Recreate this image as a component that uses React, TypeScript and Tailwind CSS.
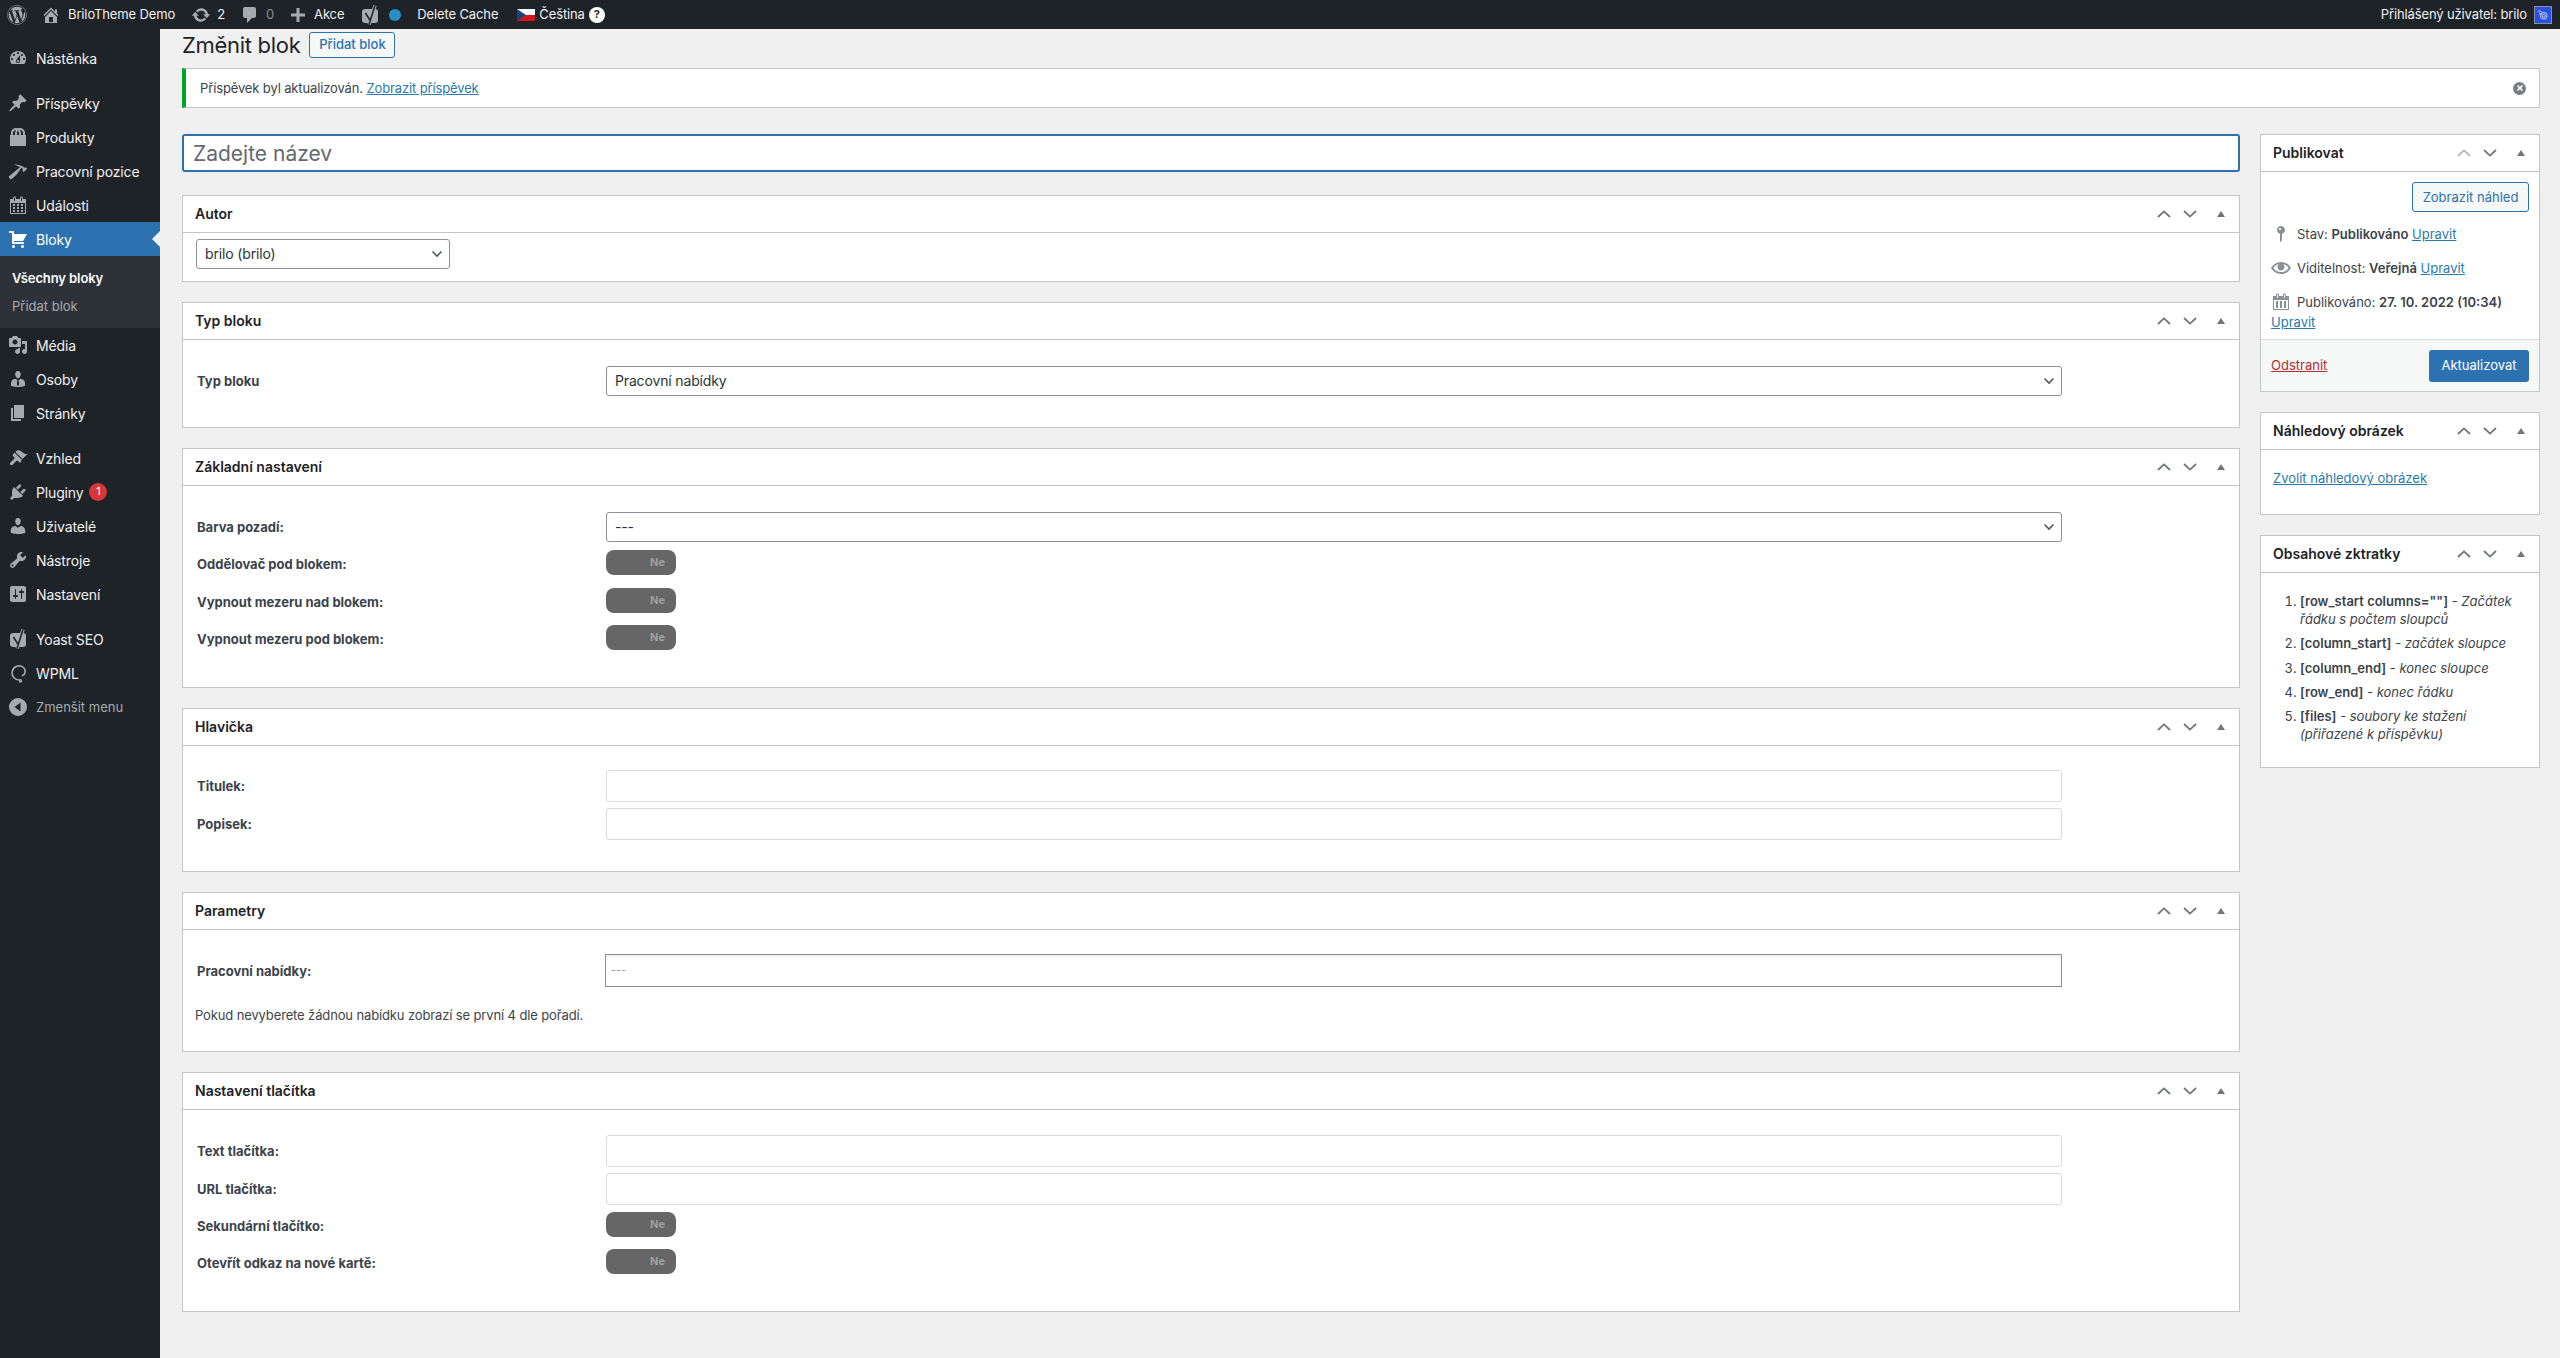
import React from "react";
import { FaWordpress } from "react-icons/fa";

// =============================================================================
// ICONS - dashicons style paths, 20x20 box
// =============================================================================

const paths = {
  dashboard:
    "M3.76 16h12.48c1.1-1.37 1.76-3.11 1.76-5 0-4.42-3.58-8-8-8s-8 3.58-8 8c0 1.89.66 3.63 1.76 5zM10 4c.55 0 1 .45 1 1s-.45 1-1 1-1-.45-1-1 .45-1 1-1zM6 6c.55 0 1 .45 1 1s-.45 1-1 1-1-.45-1-1 .45-1 1-1zm8 0c.55 0 1 .45 1 1s-.45 1-1 1-1-.45-1-1 .45-1 1-1zm-5.37 5.55L12 7v6c0 1.1-.9 2-2 2s-2-.9-2-2c0-.57.24-1.08.63-1.45zM4 10c.55 0 1 .45 1 1s-.45 1-1 1-1-.45-1-1 .45-1 1-1zm12 0c.55 0 1 .45 1 1s-.45 1-1 1-1-.45-1-1 .45-1 1-1zm-5 3c0-.55-.45-1-1-1s-1 .45-1 1 .45 1 1 1 1-.45 1-1z",
  post: "M10.44 3.02l1.82-1.82 6.36 6.35-1.83 1.82c-1.05-.68-2.48-.57-3.41.36l-.75.75c-.92.93-1.04 2.35-.35 3.41l-1.83 1.82-2.41-2.41-2.8 2.79c-.42.42-3.38 2.71-3.8 2.29s1.86-3.39 2.28-3.81l2.79-2.79L4.1 9.36l1.83-1.82c1.05.69 2.48.57 3.4-.36l.75-.75c.93-.92 1.05-2.35.36-3.41z",
  products:
    "M17 8h1v11H2V8h1V6c0-2.76 2.24-5 5-5 .71 0 1.39.15 2 .42.61-.27 1.29-.42 2-.42 2.76 0 5 2.24 5 5v2zM5 6v2h2V6c0-1.13.39-2.16 1.02-3H8C6.35 3 5 4.35 5 6zm10 2V6c0-1.65-1.35-3-3-3h-.02c.63.84 1.02 1.87 1.02 3v2h2zm-5-4.22C9.39 4.33 9 5.12 9 6v2h2V6c0-.88-.39-1.67-1-2.22z",
  hammer:
    "M17.7 6.32l1.41 1.42-3.47 3.41-1.42-1.42.84-.82c-.32-.76-.81-1.57-1.51-2.31l-4.61 6.59-5.26 4.7c-.39.39-1.02.39-1.42 0l-1.2-1.21c-.39-.39-.39-1.02 0-1.41l10.97-9.04c-1.37-.86-3.11-1.68-5.06-2.44l.32-.56c2.87.68 5.72 1.27 7.45 2.28.83.48 1.37.9 1.79 1.25z",
  calendarAlt:
    "M15 4h3v15H2V4h3V3c0-.41.15-.76.44-1.06.29-.29.65-.44 1.06-.44s.77.15 1.06.44c.29.3.44.65.44 1.06v1h4V3c0-.41.15-.76.44-1.06.29-.29.65-.44 1.06-.44s.77.15 1.06.44c.29.3.44.65.44 1.06v1zM6 3v2.5c0 .14.05.26.15.36.09.09.21.14.35.14s.26-.05.35-.14c.1-.1.15-.22.15-.36V3c0-.14-.05-.26-.15-.35-.09-.1-.21-.15-.35-.15s-.26.05-.35.15c-.1.09-.15.21-.15.35zm7 0v2.5c0 .14.05.26.14.36.1.09.22.14.36.14s.26-.05.36-.14c.09-.1.14-.22.14-.36V3c0-.14-.05-.26-.14-.35-.1-.1-.22-.15-.36-.15s-.26.05-.36.15c-.09.09-.14.21-.14.35zm4 15V8H3v10h14zM7 9v2H5V9h2zm2 0h2v2H9V9zm4 2V9h2v2h-2zm-6 1v2H5v-2h2zm2 0h2v2H9v-2zm4 2v-2h2v2h-2zm-6 1v2H5v-2h2zm4 2H9v-2h2v2zm4 0h-2v-2h2v2z",
  cart: "M6 13h9c.55 0 1 .45 1 1s-.45 1-1 1H5c-.55 0-1-.45-1-1V4H2c-.55 0-1-.45-1-1s.45-1 1-1h3c.55 0 1 .45 1 1v2h13l-4 7H6v1zm-.5 3c.83 0 1.5.67 1.5 1.5S6.33 19 5.5 19 4 18.33 4 17.5 4.67 16 5.5 16zm9 0c.83 0 1.5.67 1.5 1.5s-.67 1.5-1.5 1.5-1.5-.67-1.5-1.5.67-1.5 1.5-1.5z",
  media:
    "M13 11V4c0-.55-.45-1-1-1h-1.67L9 1H5L3.67 3H2c-.55 0-1 .45-1 1v7c0 .55.45 1 1 1h10c.55 0 1-.45 1-1zM7 4.5c1.38 0 2.5 1.12 2.5 2.5S8.38 9.5 7 9.5 4.5 8.38 4.5 7 5.62 4.5 7 4.5zM14 6h5v10.5c0 1.38-1.12 2.5-2.5 2.5S14 17.88 14 16.5s1.12-2.5 2.5-2.5c.17 0 .34.02.5.05V9h-3V6zm-4 8.05V13h2v3.5c0 1.38-1.12 2.5-2.5 2.5S7 17.88 7 16.5 8.12 14 9.5 14c.17 0 .34.02.5.05z",
  businessman:
    "M7.3 6l-.03-.19c-.04-.37-.05-.73-.03-1.08.02-.36.1-.71.25-1.04.14-.32.31-.61.52-.86s.49-.46.83-.6c.34-.15.72-.23 1.13-.23.69 0 1.26.2 1.71.59s.76.87.91 1.44.18 1.16.09 1.78l-.03.19c-.01.09-.05.25-.11.48-.05.24-.12.47-.2.69-.08.21-.19.45-.34.72-.14.27-.3.49-.47.69-.18.19-.4.34-.67.48-.27.13-.55.19-.86.19s-.59-.06-.87-.19c-.26-.13-.49-.29-.67-.5-.18-.2-.34-.42-.49-.66-.15-.25-.26-.49-.34-.73-.09-.25-.16-.47-.21-.67-.06-.21-.1-.37-.12-.5zm9.2 6.24c.41.7.5 1.41.5 2.14v2.49c0 .03-.12.08-.29.13-.18.04-.42.13-.97.27-.55.12-1.1.24-1.65.34s-1.19.19-1.95.27c-.75.08-1.46.12-2.13.12-.68 0-1.39-.04-2.14-.12-.75-.07-1.4-.17-1.98-.27-.58-.11-1.08-.23-1.56-.34-.49-.11-.8-.21-1.06-.29L3 16.87v-2.49c0-.75.07-1.46.46-2.15s.81-1.25 1.5-1.68C5.66 10.12 7.19 10 8 10l1.67 1.67L9 13v3l1.02 1.08L11 16v-3l-.68-1.33L11.97 10c.77 0 2.2.07 2.9.52.71.45 1.21 1.02 1.63 1.72z",
  page: "M6 15V2h10v13H6zm-1 1h8v2H3V5h2v11z",
  appearance:
    "M14.48 11.06L7.41 3.99l1.5-1.5c.5-.56 2.3-.47 3.51.32 1.21.8 1.43 1.28 2.91 2.1 1.18.64 2.45 1.26 4.45.85zm-.71.71L6.7 4.7 4.93 6.47c-.39.39-.39 1.02 0 1.41l1.06 1.06c.59.59.59 1.53 0 2.12l-3.53 3.53c-.59.59-.59 1.54 0 2.12.59.59 1.53.59 2.12 0l3.53-3.53c.59-.59 1.53-.59 2.12 0l1.06 1.06c.39.39 1.02.39 1.41 0z",
  plugins:
    "M13.11 4.36L9.87 7.6 8 5.73l3.24-3.24c.35-.34 1.05-.2 1.56.32.52.51.66 1.21.31 1.55zm-8 1.77l.91-1.12 9.01 9.01-1.19.84c-.71.71-2.63 1.16-3.82 1.16H6.14L4.9 17.26c-.59.59-1.54.59-2.12 0-.59-.58-.59-1.53 0-2.12l1.24-1.24v-3.88c0-1.13.4-3.19 1.09-3.89zm7.26 3.97l3.24-3.24c.34-.35 1.04-.21 1.55.31.52.51.66 1.21.31 1.55l-3.24 3.25z",
  users:
    "M10 9.25c-2.27 0-2.73-3.44-2.73-3.44C7 4.02 7.82 2 9.97 2c2.16 0 2.98 2.02 2.71 3.81 0 0-.41 3.44-2.68 3.44zm0 2.57L12.72 10c2.39 0 4.52 2.33 4.52 4.53v2.49s-3.65 1.13-7.24 1.13c-3.65 0-7.24-1.13-7.24-1.13v-2.49c0-2.25 1.94-4.48 4.47-4.48z",
  tools:
    "M16.68 9.77c-1.34 1.34-3.3 1.67-4.95.99l-5.41 6.52c-.99.99-2.59.99-3.58 0s-.99-2.59 0-3.57l6.52-5.42c-.68-1.65-.35-3.61.99-4.95 1.28-1.28 3.12-1.62 4.72-1.06l-2.89 2.89 2.82 2.82 2.86-2.87c.53 1.58.18 3.39-1.08 4.65zM3.81 16.21c.4.39 1.04.39 1.43 0 .4-.4.4-1.04 0-1.43-.39-.4-1.03-.4-1.43 0-.39.39-.39 1.03 0 1.43z",
  settings:
    "M18 16V4c0-1.1-.9-2-2-2H4c-1.1 0-2 .9-2 2v12c0 1.1.9 2 2 2h12c1.1 0 2-.9 2-2zM8 11h1c.55 0 1 .45 1 1s-.45 1-1 1H8v1.5c0 .28-.22.5-.5.5s-.5-.22-.5-.5V13H6c-.55 0-1-.45-1-1s.45-1 1-1h1V5.5c0-.28.22-.5.5-.5s.5.22.5.5V11zm5-2h-1c-.55 0-1-.45-1-1s.45-1 1-1h1V5.5c0-.28.22-.5.5-.5s.5.22.5.5V7h1c.55 0 1 .45 1 1s-.45 1-1 1h-1v5.5c0 .28-.22.5-.5.5s-.5-.22-.5-.5V9z",
  collapse: "M10 1a9 9 0 1 0 0 18 9 9 0 0 0 0-18zm2.5 4.5v9L6.5 10z",
  home: "M16 8.5l1.53 1.53-1.06 1.06L10 4.62l-6.47 6.47-1.06-1.06L10 2.5l4 4v-2h2v4zm-6-2.46l6 5.99V18H4v-5.97zM12 17v-5H8v5h4z",
  update:
    "M10.2 3.28c3.53 0 6.43 2.61 6.92 6h2.08l-3.5 4-3.5-4h2.32c-.45-1.97-2.21-3.45-4.32-3.45-1.45 0-2.73.71-3.54 1.78L4.95 5.66C6.23 4.2 8.11 3.28 10.2 3.28zm-.4 13.44c-3.52 0-6.43-2.61-6.92-6H.8l3.5-4c1.17 1.33 2.33 2.67 3.5 4H5.48c.45 1.97 2.21 3.45 4.32 3.45 1.45 0 2.73-.71 3.54-1.78l1.71 1.95c-1.28 1.46-3.15 2.38-5.25 2.38z",
  comment: "M5 2h9c1.1 0 2 .9 2 2v7c0 1.1-.9 2-2 2h-2l-5 5v-5H5c-1.1 0-2-.9-2-2V4c0-1.1.9-2 2-2z",
  plus: "M17 8.5v3h-5.5V17h-3v-5.5H3v-3h5.5V3h3v5.5z",
  status:
    "M14 6c0 1.86-1.28 3.41-3 3.86V16c0 1-2 2-2 2V9.86c-1.72-.45-3-2-3-3.86 0-2.21 1.79-4 4-4s4 1.79 4 4zM8 5c0 .55.45 1 1 1s1-.45 1-1-.45-1-1-1-1 .45-1 1z",
  eye: "M19.7 9.4C17.7 6 14 3.9 10 3.9S2.3 6 .3 9.4L0 10l.3.6c2 3.4 5.7 5.5 9.7 5.5s7.7-2.1 9.7-5.5l.3-.6-.3-.6zM10 14.1c-3.1 0-6-1.6-7.7-4.1C3.6 8 5.7 6.6 8 6.1c-.9.6-1.5 1.7-1.5 2.9 0 1.9 1.6 3.5 3.5 3.5s3.5-1.6 3.5-3.5c0-1.2-.6-2.3-1.5-2.9 2.3.5 4.4 1.9 5.7 3.9-1.7 2.5-4.6 4.1-7.7 4.1z",
  calendar:
    "M15 4h3v14H2V4h3V3c0-.83.67-1.5 1.5-1.5S8 2.17 8 3v1h4V3c0-.83.67-1.5 1.5-1.5S15 2.17 15 3v1zM6 3v2.5c0 .28.22.5.5.5S7 5.78 7 5.5V3c0-.28-.22-.5-.5-.5S6 2.72 6 3zm7 0v2.5c0 .28.22.5.5.5s.5-.22.5-.5V3c0-.28-.22-.5-.5-.5s-.5.22-.5.5zm4 14V8H3v9zM7 16V9H5v7h2zm4 0V9H9v7h2zm4 0V9h-2v7h2z",
};

type IconName = keyof typeof paths;

const Dash: React.FC<{ name: IconName; className?: string }> = ({ name, className }) => (
  <svg viewBox="0 0 20 20" fill="currentColor" fillRule="evenodd" className={className}>
    <path d={paths[name]} />
  </svg>
);

const WpmlIcon: React.FC = () => (
  <svg viewBox="0 0 20 20" fill="none" stroke="currentColor" strokeWidth="1.6" className="w-5 h-5">
    <path d="M15.5 4.5a7 7 0 1 0-3 12.3M15.5 4.5c1.8 1.8 2 4.6.7 6.8-.6 1-1.6 1.5-2.4.9M12.5 16.8c.9.1 1.2 1.5.2 1.9-.6.2-1.2-.1-1.4-.6" />
  </svg>
);

// filled box with the y cut out, the long stroke sticks out of the box
const YoastIcon: React.FC<{ className?: string }> = ({ className }) => (
  <svg viewBox="0 0 20 20" fill="none" className={className}>
    <rect x="2" y="4" width="16" height="14" rx="3" fill="#a7aaad" />
    <path d="M15 .5L9 19.5" stroke="#a7aaad" strokeWidth="3.4" />
    <path d="M15 .5L9 19.5M5.5 8l4.3 7" stroke="#1e2328" strokeWidth="1.5" />
  </svg>
);

// =============================================================================
// ADMIN BAR
// =============================================================================

const AdminBar: React.FC = () => (
  <header className="h-[29px] bg-[#1e2327] flex items-center text-[13px] tracking-[-0.13px] text-[#f0f0f1] shrink-0">
    <FaWordpress className="ml-[7px] w-5 h-5 text-[#a7aaad]" />
    <Dash name="home" className="ml-[14px] w-5 h-5 text-[#a7aaad]" />
    <span className="ml-[7px]">BriloTheme Demo</span>
    <Dash name="update" className="ml-[16px] w-5 h-5 text-[#a7aaad]" />
    <span className="ml-[6px]">2</span>
    <Dash name="comment" className="ml-[15px] w-5 h-5 text-[#a7aaad]" />
    <span className="ml-[6px] text-[#8b8f94]">0</span>
    <Dash name="plus" className="ml-[14px] w-5 h-5 text-[#a7aaad]" />
    <span className="ml-[6px]">Akce</span>
    <YoastIcon className="ml-[16px] w-5 h-5" />
    <span className="ml-[9px] w-3 h-3 rounded-full bg-[#2a8fc9]" />
    <span className="ml-[16px]">Delete Cache</span>
    <svg viewBox="0 0 18 12" className="ml-[19px] w-[18px] h-3">
      <rect width="18" height="6" fill="#fff" />
      <rect y="6" width="18" height="6" fill="#d7141a" />
      <path d="M0 0l9 6-9 6z" fill="#11457e" />
    </svg>
    <span className="ml-1">Čeština</span>
    <span className="ml-1 w-4 h-4 rounded-full bg-white text-[#1e2327] flex items-center justify-center text-[11px] font-bold">?</span>
    <span className="ml-auto">Přihlášený uživatel: brilo</span>
    <span className="ml-[7px] mr-2 w-[18px] h-[18px] bg-[#2a50e6] border border-[#8c8f94] flex items-center justify-center">
      <svg viewBox="0 0 16 16" fill="none" stroke="#fff" strokeWidth="1" className="w-3 h-3">
        <circle cx="9" cy="9" r="4.5" />
        <circle cx="9" cy="9" r="2" />
        <path d="M1 3h5M3 6.5h3" />
      </svg>
    </span>
  </header>
);

// =============================================================================
// SIDEBAR
// =============================================================================

const menuGroups: { name?: IconName; label: string; badge?: string; active?: boolean; sep?: boolean }[] = [
  { name: "dashboard", label: "Nástěnka" },
  { name: "post", label: "Příspěvky", sep: true },
  { name: "products", label: "Produkty" },
  { name: "hammer", label: "Pracovní pozice" },
  { name: "calendarAlt", label: "Události" },
  { name: "cart", label: "Bloky", active: true },
];

const menuRest: { name?: IconName; label: string; badge?: string; sep?: boolean; custom?: "yoast" | "wpml"; dim?: boolean }[] = [
  { name: "media", label: "Média" },
  { name: "businessman", label: "Osoby" },
  { name: "page", label: "Stránky" },
  { name: "appearance", label: "Vzhled", sep: true },
  { name: "plugins", label: "Pluginy", badge: "1" },
  { name: "users", label: "Uživatelé" },
  { name: "tools", label: "Nástroje" },
  { name: "settings", label: "Nastavení" },
  { custom: "yoast", label: "Yoast SEO", sep: true },
  { custom: "wpml", label: "WPML" },
  { name: "collapse", label: "Zmenšit menu", dim: true },
];

const Sidebar: React.FC = () => (
  <aside className="w-40 shrink-0 bg-[#1e2328] pt-3 text-sm text-[#f0f0f1]">
    {menuGroups.map((item) => (
      <div
        key={item.label}
        className={`relative h-[34px] flex items-center ${item.sep ? "mt-[11px]" : ""} ${item.active ? "bg-[#2c72b0] text-white" : ""}`}
      >
        <span className={`w-9 flex justify-center pl-0 ${item.active ? "text-white" : "text-[#a7aaad]"}`}>
          <Dash name={item.name!} className="w-5 h-5" />
        </span>
        <span className="pt-px tracking-[-0.15px]">{item.label}</span>
        {item.active && (
          <span className="absolute right-0 top-[9px] border-y-8 border-r-8 border-y-transparent border-r-[#f0f0f0]" />
        )}
      </div>
    ))}
    <div className="bg-[#2c3238] py-[7px] text-[13px]">
      <div className="h-[29px] flex items-center pl-3 pt-px font-semibold tracking-[-0.1px] text-white">Všechny bloky</div>
      <div className="h-[29px] flex items-center pl-3 text-[#a7aaad]">Přidat blok</div>
    </div>
    {menuRest.map((item) => (
      <div key={item.label} className={`h-[34px] flex items-center ${item.sep ? "mt-[11px]" : ""} ${item.dim ? "text-[#a7aaad] text-[13px]" : ""}`}>
        <span className="w-9 flex justify-center text-[#a7aaad]">
          {item.custom === "yoast" && <YoastIcon className="w-5 h-5" />}
          {item.custom === "wpml" && <WpmlIcon />}
          {item.name && <Dash name={item.name} className="w-5 h-5" />}
        </span>
        <span className={`pt-px ${item.dim ? "" : "tracking-[-0.15px]"}`}>{item.label}</span>
        {item.badge && (
          <span className="ml-[6px] w-[18px] h-[18px] rounded-full bg-[#d63638] text-white text-[11px] flex items-center justify-center">
            {item.badge}
          </span>
        )}
      </div>
    ))}
  </aside>
);

// =============================================================================
// BOX PARTS
// =============================================================================

const BoxControls: React.FC<{ upDisabled?: boolean }> = ({ upDisabled }) => (
  <div className="ml-auto flex items-center">
    <svg viewBox="0 0 14 8" fill="none" strokeWidth="1.8" className={`w-[14px] h-2 ${upDisabled ? "stroke-[#b4b6b9]" : "stroke-[#72767c]"}`}>
      <path d="M1 7l6-5.6L13 7" />
    </svg>
    <svg viewBox="0 0 14 8" fill="none" strokeWidth="1.8" className="ml-3 w-[14px] h-2 stroke-[#72767c]">
      <path d="M1 1l6 5.6L13 1" />
    </svg>
    <span className="ml-5 mr-[14px] border-x-4 border-b-[6px] border-x-transparent border-b-[#72767c]" />
  </div>
);

const Box: React.FC<{ title: string; upDisabled?: boolean; children: React.ReactNode }> = ({
  title,
  upDisabled,
  children,
}) => (
  <section className="bg-white border border-[#c4c4c6]">
    <div className="h-[37px] flex items-center pl-3 border-b border-[#c4c4c6] text-sm font-semibold text-[#1d2327]">
      {title}
      <BoxControls upDisabled={upDisabled} />
    </div>
    {children}
  </section>
);

const Chevron: React.FC = () => (
  <svg
    viewBox="0 0 12 8"
    fill="none"
    stroke="#50575e"
    strokeWidth="1.6"
    className="absolute right-[7px] top-[11px] w-3 h-2 pointer-events-none"
  >
    <path d="M1.5 1.5L6 6l4.5-4.5" />
  </svg>
);

const SelectBox: React.FC<{ value: string; className: string }> = ({ value, className }) => (
  <div className={`relative ${className}`}>
    <select
      defaultValue={value}
      className="w-full h-[30px] appearance-none bg-white border border-[#8c8f94] rounded-[3px] pl-2 text-sm tracking-[-0.15px] text-[#2c3338]"
    >
      <option>{value}</option>
    </select>
    <Chevron />
  </div>
);

const Row: React.FC<{ label: string; offset?: boolean; className?: string; children: React.ReactNode }> = ({
  label,
  offset,
  className,
  children,
}) => (
  <div className={`flex items-center pl-[14px] ${className ?? ""}`}>
    <label className={`w-[409px] shrink-0 text-[13px] font-bold text-[#3c434a] ${offset ? "pt-[5px]" : "pt-[2px]"}`}>
      {label}
    </label>
    {children}
  </div>
);

const TextField: React.FC = () => (
  <input type="text" className="w-[1456px] h-8 bg-white border border-[#dcdcde] rounded-[3px]" />
);

const Toggle: React.FC = () => (
  <div className="w-[70px] h-[25px] rounded-lg bg-[#666666] flex items-center justify-end pr-[11px] text-[11px] font-bold text-[#a0a0a0]">
    Ne
  </div>
);

// =============================================================================
// APP
// =============================================================================

const linkClass = "text-[#2a7bad] underline";

export default function App() {
  return (
    <div className="min-h-screen flex flex-col bg-[#f0f0f0] [font-family:Inter,sans-serif] text-[13px] text-[#3c434a]">
      <AdminBar />
      <div className="flex flex-1">
        <Sidebar />
        <main className="flex-1 pl-[22px] pr-5 pt-[3px]">
          {/* Title row */}
          <div className="h-[26px] flex items-center">
            <h1 className="text-[22px] tracking-[-0.3px] text-[#1d2327]">Změnit blok</h1>
            <button type="button" className="ml-[9px] w-[86px] h-[26px] border border-[#2c72b0] rounded-[3px] bg-[#f6f7f7] text-[13px] font-medium text-[#2c72b0]">
              Přidat blok
            </button>
          </div>

          {/* Notice */}
          <div className="mt-[10px] h-10 flex items-center bg-white border border-[#c4c4c6] border-l-4 border-l-[#00a32a] pl-[14px] pr-[13px]">
            <span className="pt-px tracking-[-0.13px]">
              Příspěvek byl aktualizován. <a className={linkClass}>Zobrazit příspěvek</a>
            </span>
            <span className="ml-auto w-[13px] h-[13px] rounded-full bg-[#787c82] flex items-center justify-center">
              <svg viewBox="0 0 8 8" stroke="#fff" strokeWidth="1.6" className="w-2 h-2">
                <path d="M1.5 1.5l5 5M6.5 1.5l-5 5" />
              </svg>
            </span>
          </div>

          <div className="mt-[26px] flex items-start gap-5">
            {/* Main column */}
            <div className="w-[2058px] shrink-0">
              <input
                type="text"
                placeholder="Zadejte název"
                className="w-full h-[38px] bg-white border-2 border-[#2c72b0] rounded-[3px] pl-[9px] text-[21px] outline-none placeholder:text-[#646970]"
              />

              <div className="mt-[23px] flex flex-col gap-5">
                <Box title="Autor">
                  <div className="pt-[6px] pb-3 pl-[13px]">
                    <SelectBox value="brilo (brilo)" className="w-[254px]" />
                  </div>
                </Box>

                <Box title="Typ bloku">
                  <div className="pt-[26px] pb-[31px]">
                    <Row label="Typ bloku">
                      <SelectBox value="Pracovní nabídky" className="w-[1456px]" />
                    </Row>
                  </div>
                </Box>

                <Box title="Základní nastavení">
                  <div className="pt-[26px] pb-[37px]">
                    <Row label="Barva pozadí:">
                      <SelectBox value="---" className="w-[1456px]" />
                    </Row>
                    <Row label="Oddělovač pod blokem:" offset className="mt-2">
                      <Toggle />
                    </Row>
                    <Row label="Vypnout mezeru nad blokem:" offset className="mt-[13px]">
                      <Toggle />
                    </Row>
                    <Row label="Vypnout mezeru pod blokem:" offset className="mt-[12px]">
                      <Toggle />
                    </Row>
                  </div>
                </Box>

                <Box title="Hlavička">
                  <div className="pt-6 pb-[31px]">
                    <Row label="Titulek:">
                      <TextField />
                    </Row>
                    <Row label="Popisek:" className="mt-[6px]">
                      <TextField />
                    </Row>
                  </div>
                </Box>

                <Box title="Parametry">
                  <div className="pt-6 pb-[26px]">
                    <Row label="Pracovní nabídky:">
                      <div className="w-[1457px] h-[33px] -ml-px flex items-center bg-white border border-[#8c8f94] shadow-[inset_0_2px_3px_rgba(0,0,0,0.07)] pl-[5px] text-[11px] text-[#999999]">
                        ---
                      </div>
                    </Row>
                    <p className="mt-[18px] pl-3 h-5 leading-5 tracking-[-0.13px]">Pokud nevyberete žádnou nabídku zobrazí se první 4 dle pořadí.</p>
                  </div>
                </Box>

                <Box title="Nastavení tlačítka">
                  <div className="pt-[25px] pb-[37px]">
                    <Row label="Text tlačítka:">
                      <TextField />
                    </Row>
                    <Row label="URL tlačítka:" className="mt-[6px]">
                      <TextField />
                    </Row>
                    <Row label="Sekundární tlačítko:" offset className="mt-[7px]">
                      <Toggle />
                    </Row>
                    <Row label="Otevřít odkaz na nové kartě:" offset className="mt-3">
                      <Toggle />
                    </Row>
                  </div>
                </Box>
              </div>
            </div>

            {/* Side column */}
            <div className="w-[280px] shrink-0 flex flex-col gap-5">
              <Box title="Publikovat" upDisabled>
                <div className="px-[10px] pt-[10px] pb-[7px]">
                  <div className="flex justify-end">
                    <button type="button" className="w-[117px] h-[30px] pt-px border border-[#2c72b0] rounded-[3px] bg-[#f6f7f7] text-[#2c72b0]">
                      Zobrazit náhled
                    </button>
                  </div>
                  <div className="mt-3 leading-5 h-5">
                    <Dash name="status" className="inline-block align-top w-5 h-5 mr-[6px] text-[#8c8f94]" />
                    Stav: <b className="font-semibold">Publikováno</b> <a className={linkClass}>Upravit</a>
                  </div>
                  <div className="mt-[14px] leading-5 h-5">
                    <Dash name="eye" className="inline-block align-top w-5 h-5 mr-[6px] text-[#8c8f94]" />
                    Viditelnost: <b className="font-semibold">Veřejná</b> <a className={linkClass}>Upravit</a>
                  </div>
                  <div className="mt-[14px] leading-5">
                    <Dash name="calendar" className="inline-block align-top w-5 h-5 mr-[6px] text-[#8c8f94]" />
                    Publikováno: <b className="font-semibold">27. 10. 2022 (10:34)</b> <a className={linkClass}>Upravit</a>
                  </div>
                </div>
                <div className="h-[52px] flex items-center justify-between px-[10px] bg-[#f6f7f7] border-t border-[#dcdcde]">
                  <a className="text-[#b32d2e] underline">Odstranit</a>
                  <button type="button" className="w-[100px] h-8 rounded-[3px] bg-[#2c72b0] text-white">
                    Aktualizovat
                  </button>
                </div>
              </Box>

              <Box title="Náhledový obrázek">
                <div className="pl-3 pt-[18px] pb-[26px] leading-5">
                  <a className={linkClass}>Zvolit náhledový obrázek</a>
                </div>
              </Box>

              <Box title="Obsahové zktratky">
                <ol className="list-decimal pl-[39px] pr-3 pt-[19px] pb-[18px] leading-[18.2px]">
                  <li className="mb-[6px]">
                    <b className="font-semibold">[row_start columns=""]</b> - <i>Začátek řádku s počtem sloupců</i>
                  </li>
                  <li className="mb-[6px]">
                    <b className="font-semibold">[column_start]</b> - <i>začátek sloupce</i>
                  </li>
                  <li className="mb-[6px]">
                    <b className="font-semibold">[column_end]</b> - <i>konec sloupce</i>
                  </li>
                  <li className="mb-[6px]">
                    <b className="font-semibold">[row_end]</b> - <i>konec řádku</i>
                  </li>
                  <li className="mb-[6px]">
                    <b className="font-semibold">[files]</b> - <i>soubory ke stažení (přiřazené k příspěvku)</i>
                  </li>
                </ol>
              </Box>
            </div>
          </div>
        </main>
      </div>
    </div>
  );
}
